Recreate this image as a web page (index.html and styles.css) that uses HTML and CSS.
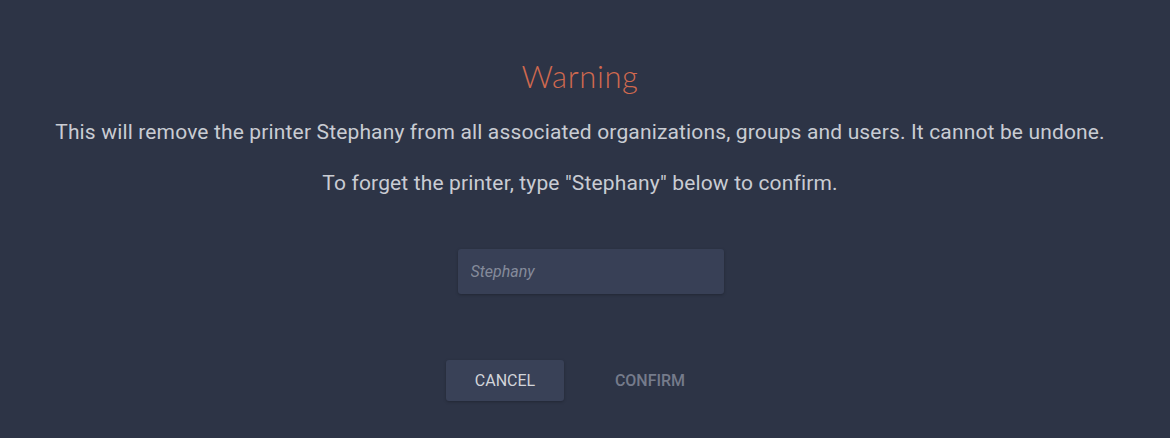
FILE: index.html
```html
<!DOCTYPE html>
<html>
<head>
<meta charset="utf-8">
<link rel="stylesheet" href="styles.css">
</head>
<body>
<div class="dialog">
  <h1 class="title">Warning</h1>
  <p class="msg">This will remove the printer Stephany from all associated organizations, groups and users. It cannot be undone.</p>
  <p class="msg msg2">To forget the printer, type "Stephany" below to confirm.</p>
  <input class="field" type="text" placeholder="Stephany">
  <div class="actions">
    <button class="btn btn-cancel">CANCEL</button>
    <button class="btn btn-confirm" disabled>CONFIRM</button>
  </div>
</div>
</body>
</html>
```
FILE: styles.css
```css
html, body {
  margin: 0;
  padding: 0;
  background: #2d3446;
  height: 100%;
}
.dialog {
  display: flex;
  flex-direction: column;
  align-items: center;
  font-family: Roboto, "Liberation Sans", sans-serif;
  padding-top: 56px;
  padding-right: 10px;
}
.title {
  margin: 0;
  font-family: Lato, "Open Sans", sans-serif;
  font-weight: 300;
  font-size: 31px;
  line-height: 40px;
  color: #d0694f;
  letter-spacing: 0.6px;
}
.msg {
  margin: 0;
  font-size: 21px;
  line-height: 28px;
  letter-spacing: 0.15px;
  color: #c9ccd3;
  margin-top: 22px;
}
.msg2 {
  margin-top: 23px;
}
.field {
  margin-top: 52px;
  margin-left: 21px;
  width: 266px;
  height: 45px;
  box-sizing: border-box;
  border: none;
  border-radius: 3px;
  background: #384056;
  box-shadow: 0 1px 3px rgba(0,0,0,0.25);
  padding: 0 13px;
  font-family: Roboto, sans-serif;
  font-size: 16px;
  color: #c9ccd3;
  outline: none;
}
.field::placeholder {
  color: #858b9b;
  font-style: italic;
}
.actions {
  display: flex;
  gap: 27px;
  margin-top: 66px;
  margin-left: -5px;
}
.btn {
  border: none;
  height: 41px;
  width: 118px;
  padding: 0;
  font-family: Roboto, sans-serif;
  font-size: 16px;
  border-radius: 3px;
  cursor: pointer;
}
.btn-cancel {
  background: #394157;
  color: #d2d4da;
  box-shadow: 0 1px 3px rgba(0,0,0,0.25);
}
.btn-confirm {
  background: transparent;
  color: #757b8b;
  font-weight: 500;
}
```
